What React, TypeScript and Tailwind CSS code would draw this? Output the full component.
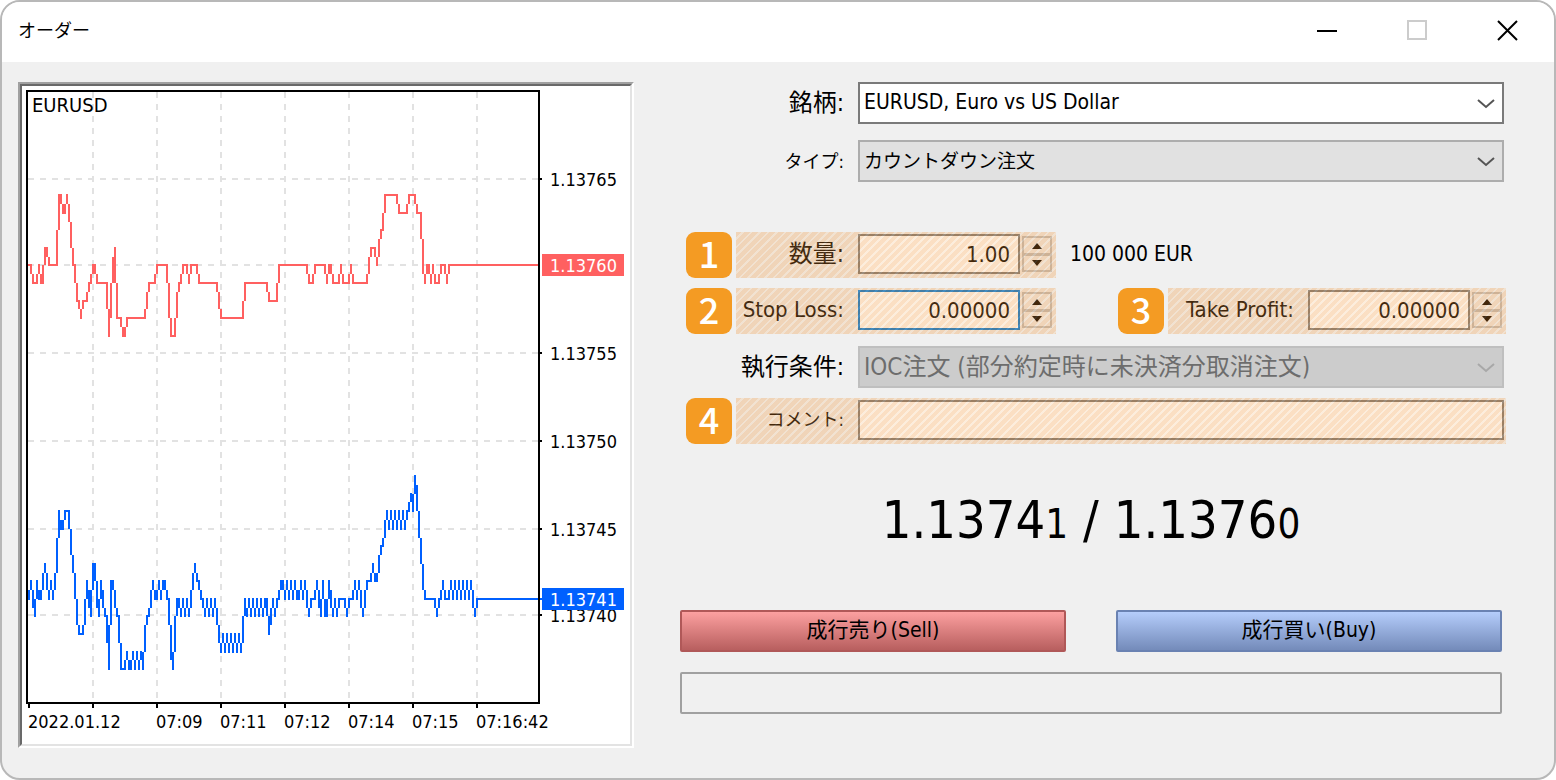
import type { ReactNode } from "react";
import clsx from "clsx";

// Price levels are the last two digits of 1.137xx, one per 2px column, as "level*count"
const ASK =
  "60*2 59*3 60 59*2 61*2 60*5 64*2 63*2 64 63 62 60*2 58*2 57 58*3 59*2 60*2 59*6 56 58 60 61 57*3 56*2 57*10 58 59*4 60*6 58 56*3 58 59*2 60*3 59 60*4 59*10 58 57*12 59*12 58*5 60*15 59*3 60*6 59 60*2 59*4 60 59*4 60 59*8 60 61*3 60 61 62*2 64*7 63*5 64*4 63*3 60 59 60*2 59 60 59*3 60*3 59 60*46";
const BID =
  "41 42 41 40 42 41*2 42 43 42 41 42 41 42 43 46 45*2 46*3 44 43 42 40 39*3 40 42 41 40 43*2 41 40 42 41 40*2 37 42*2 41 40*2 37*3 38 37*2 38 37 38 37 38 37 39 40*2 41 42 41*2 42 41 42*2 41*2 38 37 39 41*2 40 41 40 41 40 41 42 43 42*2 41*2 40 41 40 41 40 41 40 39 38 39 38 39 38 39 38 39 38 39 38 39 41 40 41 40 41 40 41 40 41 40 41*2 39 40 41 40 41*2 42*2 41 42 41 42 41 42 41*2 42 41 42 41 40 41*3 42 41 40 42 40*2 42 41 40 41 40 41*4 40 41*3 42 41 42 41 40 41 42*3 43 42*2 43 44*2 45 46 45 46 45 46 45 46 45 46 45 46*2 47 46 48 47 45 44 42 41*6 40 41*2 42 41*3 42 41 42 41 42 41 42 41 42 41 42 41 40 41*33";

const PRICES = [
  { y: 93, label: "1.13765" },
  { y: 267, label: "1.13755" },
  { y: 355, label: "1.13750" },
  { y: 443, label: "1.13745" },
  { y: 529, label: "1.13740" },
];

const TIMES = [
  { x: 7, label: "2022.01.12" },
  { x: 135, label: "07:09" },
  { x: 199, label: "07:11" },
  { x: 263, label: "07:12" },
  { x: 327, label: "07:14" },
  { x: 391, label: "07:15" },
  { x: 455, label: "07:16:42" },
];

const GRID_X = [71, 135, 199, 263, 327, 391, 455];
const GRID_Y = [93, 179, 267, 355, 443, 529];

const FIELD_FONT = "font-['DejaVu_Sans_Condensed','Noto_Sans_CJK_JP',sans-serif]";

function tickPath(series: string) {
  const ys = series.split(" ").flatMap((run) => {
    const [level, count = "1"] = run.split("*");
    return Array<number>(Number(count)).fill(179 - (Number(level) - 60) * 17.55);
  });
  return ys
    .map((y, i) => {
      const before = (y + (ys[i - 1] ?? y)) / 2;
      const after = (y + (ys[i + 1] ?? y)) / 2;
      const top = Math.ceil(Math.min(y - 1, before, after));
      const bottom = Math.ceil(Math.max(y + 1, before, after));
      return `M${7 + i * 2} ${top}V${bottom}`;
    })
    .join("");
}

function PriceTag({ y, label, fill }: { y: number; label: string; fill: string }) {
  return (
    <>
      <rect x="520" y={y - 11} width="82" height="22" fill={fill} />
      <text x="528" y={y + 7} fill="#fff">
        {label}
      </text>
    </>
  );
}

function TickChart() {
  return (
    <div className="shrink-0 self-start border-2 border-t-[#a0a0a0] border-r-white border-b-white border-l-[#a0a0a0]">
      <div className="border-2 border-t-[#696969] border-r-[#e3e3e3] border-b-[#e3e3e3] border-l-[#696969] bg-white">
        <svg
          width="608"
          height="658"
          viewBox="0 0 608 658"
          role="img"
          aria-label="EURUSD tick chart"
          className={clsx("block text-[18px]", FIELD_FONT)}
        >
          <g stroke="#e2e2e2" strokeWidth="2" strokeDasharray="6 6" shapeRendering="crispEdges">
            {GRID_X.map((x) => (
              <path key={x} d={`M${x} 6V616`} />
            ))}
            {GRID_Y.map((y) => (
              <path key={y} d={`M6 ${y}H516`} />
            ))}
          </g>
          <g strokeWidth="2" fill="none" shapeRendering="crispEdges">
            <path d={tickPath(ASK)} stroke="#ff6060" />
            <path d={tickPath(BID)} stroke="#0060ff" />
            <path d="M5 5H517V617H5Z" stroke="#000" />
            {PRICES.map((p) => (
              <path key={p.y} d={`M518 ${p.y}h2`} stroke="#000" />
            ))}
            {TIMES.map((t) => (
              <path key={t.x} d={`M${t.x} 618v4`} stroke="#000" />
            ))}
            <path d="M71 618v4" stroke="#000" />
          </g>
          <text x="10" y="26" className="text-[20px]">
            EURUSD
          </text>
          {PRICES.map((p) => (
            <text key={p.label} x="528" y={p.y + 7}>
              {p.label}
            </text>
          ))}
          {TIMES.map((t) => (
            <text key={t.label} x={t.x - 1} y="642">
              {t.label}
            </text>
          ))}
          <PriceTag y={179} label="1.13760" fill="#ff6060" />
          <PriceTag y={513} label="1.13741" fill="#0060ff" />
        </svg>
      </div>
    </div>
  );
}

function TitleBar() {
  return (
    <header className="flex h-[60px] items-center justify-between bg-white pr-[35px] pb-1 pl-4">
      <h1 className="text-[18px]">オーダー</h1>
      <div className="flex gap-[66px]">
        <button type="button" aria-label="Minimize" className="size-6">
          <svg viewBox="0 0 24 24" className="size-6" stroke="#000" strokeWidth="2">
            <path d="M2 13h20" />
          </svg>
        </button>
        <button type="button" aria-label="Maximize" disabled className="size-6">
          <svg viewBox="0 0 24 24" className="size-6" fill="none" stroke="#ccc" strokeWidth="2">
            <path d="M3 3h18v18H3z" />
          </svg>
        </button>
        <button type="button" aria-label="Close" className="size-6">
          <svg viewBox="0 0 24 24" className="size-6" stroke="#000" strokeWidth="2">
            <path d="M3 3l19 19M22 3L3 22" />
          </svg>
        </button>
      </div>
    </header>
  );
}

type SelectRowProps = {
  id: string;
  label: string;
  value: string;
  disabled?: boolean;
  labelClass: string;
  className: string;
};

function SelectRow({ id, label, value, disabled, labelClass, className }: SelectRowProps) {
  return (
    <div className="flex items-center pr-0.5">
      <label htmlFor={id} className={clsx("mr-3.5 w-[164px] shrink-0 text-right", labelClass)}>
        {label}
      </label>
      <div className="relative min-w-0 flex-1">
        <select
          id={id}
          disabled={disabled}
          className={clsx(
            "block h-[42px] w-full appearance-none rounded-none border-2 pr-10 pl-1 opacity-100",
            className,
          )}
        >
          <option>{value}</option>
        </select>
        <svg
          viewBox="0 0 18 12"
          className="pointer-events-none absolute top-4 right-[9px] h-3 w-[18px]"
          fill="none"
          stroke={disabled ? "#a8a8a8" : "#555"}
          strokeWidth="2"
        >
          <path d="M1 2l8 7 8-7" />
        </svg>
      </div>
    </div>
  );
}

function Badge({ children }: { children: ReactNode }) {
  return (
    <span className="mr-1 flex size-[46px] shrink-0 items-center justify-center rounded-[9px] bg-[#f49b23] pb-1.5 font-['Noto_Sans_CJK_JP',sans-serif] text-[36px] leading-none font-medium text-white">
      {children}
    </span>
  );
}

// Striped orange tint laid over a field that the numbered notes refer to
function Highlight({ className, children }: { className?: string; children: ReactNode }) {
  return (
    <div className={clsx("relative flex h-[46px] items-start pt-0.5", className)}>
      {children}
      <div
        aria-hidden="true"
        className="pointer-events-none absolute inset-0 bg-[repeating-linear-gradient(135deg,rgba(240,140,40,0.28)_0px,rgba(240,140,40,0.28)_4px,rgba(245,190,130,0.28)_4px,rgba(245,190,130,0.28)_6px)]"
      />
    </div>
  );
}

function SpinButtons({ name }: { name: string }) {
  return (
    <div className="mt-0.5 mr-1 ml-0.5 flex h-9 w-[30px] shrink-0 flex-col border-2 border-[#c0c0c0]">
      <button
        type="button"
        aria-label={`Increase ${name}`}
        className="flex h-[18px] items-center justify-center border-b-[3px] border-[#c0c0c0]"
      >
        <svg width="10" height="6" viewBox="0 0 10 6">
          <path d="M5 0l5 6H0z" />
        </svg>
      </button>
      <button
        type="button"
        aria-label={`Decrease ${name}`}
        className="flex flex-1 items-center justify-center"
      >
        <svg width="10" height="6" viewBox="0 0 10 6">
          <path d="M5 6L0 0h10z" />
        </svg>
      </button>
    </div>
  );
}

type NumberFieldProps = {
  id: string;
  label: string;
  value: string;
  focused?: boolean;
  labelClass: string;
};

function NumberField({ id, label, value, focused, labelClass }: NumberFieldProps) {
  return (
    <Highlight>
      <label htmlFor={id} className={clsx("mr-3.5 shrink-0 text-right leading-10", labelClass)}>
        {label}
      </label>
      <input
        id={id}
        inputMode="decimal"
        defaultValue={value}
        className={clsx(
          "h-10 w-[162px] border-2 bg-white pr-2 text-right text-[22px] outline-none",
          focused ? "border-[#0078d7]" : "border-[#7a7a7a]",
        )}
      />
      <SpinButtons name={label} />
    </Highlight>
  );
}

function Quote({ main, last }: { main: string; last: string }) {
  return (
    <span>
      {main}
      <span className="text-[40px]">{last}</span>
    </span>
  );
}

export default function App() {
  return (
    <div
      className={clsx(
        "flex min-h-screen flex-col overflow-hidden rounded-[20px] border-2 border-[#b8b8b8] bg-[#f0f0f0] text-[21px] text-black",
        FIELD_FONT,
      )}
    >
      <TitleBar />
      <main className="flex flex-1 gap-[46px] pt-5 pr-12 pb-[30px] pl-4">
        <TickChart />
        <form className="min-w-0 flex-1" onSubmit={(e) => e.preventDefault()}>
          <div className="flex flex-col gap-4">
            <SelectRow
              id="symbol"
              label="銘柄:"
              value="EURUSD, Euro vs US Dollar"
              labelClass="text-[24px]"
              className="border-[#7a7a7a] bg-white"
            />
            <SelectRow
              id="type"
              label="タイプ:"
              value="カウントダウン注文"
              labelClass="text-[18px]"
              className="border-[#adadad] bg-[#e1e1e1] text-[19px]"
            />
          </div>

          <div className="mt-[50px] flex items-center pl-1.5">
            <Badge>1</Badge>
            <NumberField id="volume" label="数量:" value="1.00" labelClass="w-[108px] text-[24px]" />
            <span className="ml-3.5">100 000 EUR</span>
          </div>

          <div className="mt-2.5 flex items-center justify-between pl-1.5">
            <div className="flex">
              <Badge>2</Badge>
              <NumberField
                id="sl"
                label="Stop Loss:"
                value="0.00000"
                focused
                labelClass="w-[108px] text-[22px]"
              />
            </div>
            <div className="flex">
              <Badge>3</Badge>
              <NumberField
                id="tp"
                label="Take Profit:"
                value="0.00000"
                labelClass="w-[126px] text-[22px]"
              />
            </div>
          </div>

          <div className="mt-3">
            <SelectRow
              id="filling"
              label="執行条件:"
              value="IOC注文 (部分約定時に未決済分取消注文)"
              disabled
              labelClass="text-[24px]"
              className="border-[#bfbfbf] bg-[#ccc] text-[24px] text-[#6d6d6d]"
            />
          </div>

          <div className="mt-2.5 flex items-center pl-1.5">
            <Badge>4</Badge>
            <Highlight className="min-w-0 flex-1 pr-0.5">
              <label
                htmlFor="comment"
                className="mr-3.5 w-[108px] shrink-0 text-right text-[18px] leading-10"
              >
                コメント:
              </label>
              <input
                id="comment"
                className="h-10 min-w-0 flex-1 border-2 border-[#7a7a7a] bg-white px-2 outline-none"
              />
            </Highlight>
          </div>

          <div className="pr-1">
            <p className="mt-11 text-center text-[52px] leading-[64px]">
              <Quote main="1.1374" last="1" /> / <Quote main="1.1376" last="0" />
            </p>

            <div className="mt-[54px] grid grid-cols-2 gap-[50px]">
              <button
                type="submit"
                className="h-[42px] rounded-[2px] border-2 border-[#b05858] bg-linear-to-b from-[#fca0a0] to-[#b85f5f]"
              >
                成行売り(Sell)
              </button>
              <button
                type="submit"
                className="h-[42px] rounded-[2px] border-2 border-[#6a82b2] bg-linear-to-b from-[#b5cdfb] to-[#748bba]"
              >
                成行買い(Buy)
              </button>
            </div>

            <div role="status" className="mt-5 h-[42px] rounded-[2px] border-2 border-[#a0a0a0]" />
          </div>
        </form>
      </main>
    </div>
  );
}
